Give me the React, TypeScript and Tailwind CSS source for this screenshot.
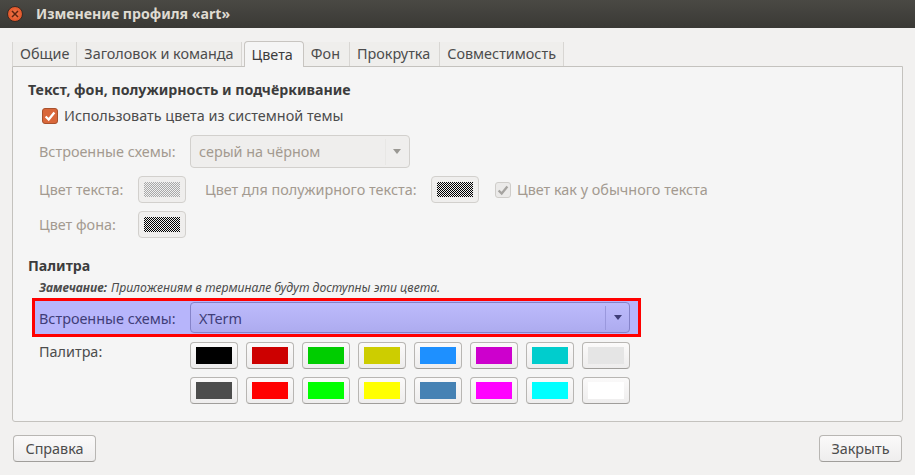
import React from 'react';

const tabs = [
    { label: 'Общие', className: 'pr-[7px]' },
    { label: 'Заголовок и команда', className: 'pr-[7px]' },
    { label: 'Цвета', className: '' },
    { label: 'Фон', className: 'pr-[9px]' },
    { label: 'Прокрутка', className: 'pr-[9px]' },
    { label: 'Совместимость', className: 'pr-[7px]' },
];

const paletteRows = [
    ['bg-[#000000]', 'bg-[#cd0000]', 'bg-[#00cd00]', 'bg-[#cdcd00]', 'bg-[#1e90ff]', 'bg-[#cd00cd]', 'bg-[#00cdcd]', 'bg-[#e5e5e5]'],
    ['bg-[#4d4d4d]', 'bg-[#ff0000]', 'bg-[#00ff00]', 'bg-[#ffff00]', 'bg-[#4682b4]', 'bg-[#ff00ff]', 'bg-[#00ffff]', 'bg-[#ffffff]'],
];

const CheckMark = ({ color }: { color: string }) => (
    <svg viewBox="0 0 16 16" className="size-[14px]" fill="none">
        <path d="M3 8.5 L6.5 12 L13 4" stroke={color} strokeWidth="2.6" />
    </svg>
);

const Arrow = ({ color }: { color: string }) => (
    <svg viewBox="0 0 8 5" className="w-[8px] h-[5px]">
        <path d="M0 0 H8 L4 5 Z" fill={color} />
    </svg>
);

const ColorButton = ({ pattern }: { pattern: 'light' | 'dark' }) => (
    <div className="w-[48px] h-[27px] p-[5px] rounded-[4px] border border-[#d2d0cd] bg-[#efeeed] flex">
        {pattern === 'light' ? (
            <div className="flex-1 bg-[repeating-conic-gradient(#a8a8a8_0_25%,#f0f0f0_0_50%)] bg-size-[2px_2px]" />
        ) : (
            <div className="flex-1 bg-[repeating-conic-gradient(#000000_0_25%,#f0f0f0_0_50%)] bg-size-[2px_2px]" />
        )}
    </div>
);

const Swatch = ({ color }: { color: string }) => (
    <div className="w-[48px] h-[27px] px-[5px] py-[4px] rounded-[4px] border border-[#b8b6b3] border-b-[#a09e9b] bg-gradient-to-b from-[#fbfafa] to-[#eeeded] flex">
        <div className={`flex-1 ${color}`} />
    </div>
);

const PushButton = ({ label }: { label: string }) => (
    <div className="w-[83px] h-[27px] flex items-center justify-center rounded-[4px] border border-[#b8b6b3] border-b-[#a09e9b] bg-gradient-to-b from-[#fbfafa] to-[#eeeded] text-[#4c4c4c]">
        {label}
    </div>
);

export default function App() {
    return (
        <div className="w-[915px] h-[475px] flex flex-col overflow-hidden bg-[#f2f1f0] font-['Noto_Sans',sans-serif] text-[14.4px] text-[#4c4c4c]">
            <div className="h-[28px] shrink-0 flex items-center gap-[13px] pl-[7px] bg-gradient-to-b from-[#4a4944] to-[#3a3935]">
                <div className="size-[16px] rounded-full bg-[radial-gradient(circle,#f47a4d,#d9481c)] border border-[#3b2a22] flex items-center justify-center">
                    <svg viewBox="0 0 8 8" className="size-[8px]">
                        <path d="M1 1 L7 7 M7 1 L1 7" stroke="#5c2410" strokeWidth="1.5" />
                    </svg>
                </div>
                <span className="text-[14.15px] font-bold text-[#dfdbd2]">Изменение профиля «art»</span>
            </div>

            <div className="flex-1 flex flex-col px-[12px] pt-[13px]">
                <div className="flex items-end h-[25px] relative z-10">
                    {tabs.map((tab) => (
                        tab.label === 'Цвета' ? (
                            <div key={tab.label} className="h-[26px] -mb-px ml-[2px] pl-[7px] pr-[10px] flex items-center rounded-t-[4px] border border-b-0 border-[#c8c5c1] bg-[#f5f5f5] text-[#3c3c3c]">
                                {tab.label}
                            </div>
                        ) : (
                            <div key={tab.label} className={`h-[24px] pl-[7px] ${tab.className} flex items-center border-r border-[#d8d6d3] bg-[#efeeec] first:border-l`}>
                                {tab.label}
                            </div>
                        )
                    ))}
                </div>

                <div className="h-[356px] rounded-b-[3px] border border-[#c4c2be] bg-[#f5f5f5] pl-[15px] pt-[14px]">
                    <div className="h-[18px] flex items-center text-[14.2px] font-bold text-[#3c3c3c]">
                        Текст, фон, полужирность и подчёркивание
                    </div>

                    <div className="h-[20px] mt-[7px] ml-[14px] flex items-center gap-[6px]">
                        <div className="size-[16px] rounded-[3px] border border-[#a8512c] bg-[#d9673a] flex items-center justify-center">
                            <CheckMark color="#ffffff" />
                        </div>
                        <span>Использовать цвета из системной темы</span>
                    </div>

                    <div className="mt-[9px] ml-[11px] flex flex-col gap-[8px] text-[#a39a90]">
                        <div className="flex items-center h-[33px]">
                            <span className="w-[151px] pt-px">Встроенные схемы:</span>
                            <div className="w-[220px] h-[33px] rounded-[4px] border border-[#d2d0cd] bg-[#efeeed] flex items-center pl-[8px]">
                                <span className="flex-1 pt-px">серый на чёрном</span>
                                <div className="w-[24px] h-[26px] border-l border-[#e8e7e5] flex items-center justify-center pr-px">
                                    <Arrow color="#9a9893" />
                                </div>
                            </div>
                        </div>
                        <div className="flex items-center h-[27px]">
                            <span className="w-[99px] pt-px">Цвет текста:</span>
                            <ColorButton pattern="light" />
                            <span className="ml-[19px] w-[226px] pt-px">Цвет для полужирного текста:</span>
                            <ColorButton pattern="dark" />
                            <div className="ml-[16px] size-[16px] rounded-[3px] border border-[#cfcdca] bg-[#ebeae9] flex items-center justify-center">
                                <CheckMark color="#a5a3a0" />
                            </div>
                            <span className="ml-[6px]">Цвет как у обычного текста</span>
                        </div>
                        <div className="flex items-center h-[27px]">
                            <span className="w-[99px] pt-px">Цвет фона:</span>
                            <ColorButton pattern="dark" />
                        </div>
                    </div>

                    <div className="h-[18px] mt-[19px] flex items-center text-[14.2px] font-bold text-[#3c3c3c]">Палитра</div>
                    <div className="h-[16px] mt-[5px] ml-[11px] flex items-center gap-[4px] text-[12.2px] italic">
                        <span className="font-bold">Замечание:</span>
                        <span>Приложениям в терминале будут доступны эти цвета.</span>
                    </div>

                    <div className="w-[609px] h-[39px] mt-[2px] ml-[4px] pl-[4px] border-[3px] border-[#ff0000] bg-[#b7b5fb] flex items-center text-[#3f3d78]">
                        <span className="w-[151px] pt-[2px]">Встроенные схемы:</span>
                        <div className="w-[440px] h-[31px] rounded-[4px] border border-[#8583c9] bg-gradient-to-b from-[#bdbbfc] to-[#adabef] flex items-center pl-[8px]">
                            <span className="flex-1 pt-[2px]">XTerm</span>
                            <div className="w-[24px] h-[24px] border-l border-[#9a98dd] flex items-center justify-center">
                                <Arrow color="#3f3d78" />
                            </div>
                        </div>
                    </div>

                    <div className="mt-[5px] ml-[11px] flex">
                        <span className="w-[151px] leading-[19px]">Палитра:</span>
                        <div className="flex flex-col gap-[8px]">
                            {paletteRows.map((row, i) => (
                                <div key={i} className="flex gap-[8px]">
                                    {row.map((color) => (
                                        <Swatch key={color} color={color} />
                                    ))}
                                </div>
                            ))}
                        </div>
                    </div>
                </div>

                <div className="mt-[13px] px-px flex justify-between">
                    <PushButton label="Справка" />
                    <PushButton label="Закрыть" />
                </div>
            </div>
        </div>
    );
}
